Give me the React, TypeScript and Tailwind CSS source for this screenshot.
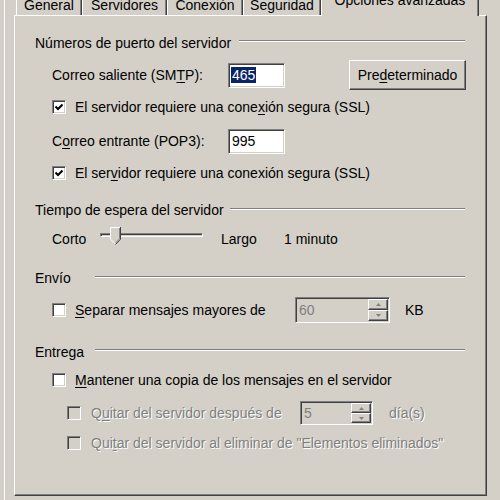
import type { ReactNode } from "react";

// underlined access key letter
const U = ({ children }: { children: ReactNode }) => (
    <span className="underline decoration-1 underline-offset-[2px]">{children}</span>
);

const Tab = ({ width, children }: { width: string; children: ReactNode }) => (
    <div
        className={`flex h-[26px] ${width} shrink-0 justify-center border-l border-t border-r border-l-white border-t-white border-r-[#404040] pt-[7px] shadow-[inset_-1px_0_#808080]`}
    >
        {children}
    </div>
);

const CheckBox = ({ checked = false, disabled = false }: { checked?: boolean; disabled?: boolean }) => (
    <div
        className={`flex h-[14px] w-[14px] shrink-0 items-center justify-center border border-t-[#808080] border-l-[#808080] border-r-white border-b-white shadow-[inset_1px_1px_#404040,inset_-1px_-1px_#d4d0c8] ${
            disabled ? "bg-[#d4d0c8]" : "bg-white"
        }`}
    >
        {checked && (
            <svg width="8" height="8" viewBox="0 0 8 8">
                <path d="M0.5 3.5 L3 6 L7.5 1.5" fill="none" stroke="#000" strokeWidth="2" />
            </svg>
        )}
    </div>
);

const Line = ({ className }: { className: string }) => (
    <div className={`h-[2px] flex-1 border-t border-b border-t-[#808080] border-b-white ${className}`} />
);

const SpinButton = ({ up = false }: { up?: boolean }) => (
    <div className="flex flex-1 items-center justify-center border border-t-white border-l-white border-r-[#404040] border-b-[#404040] bg-[#d4d0c8] shadow-[inset_-1px_-1px_#808080]">
        <svg width="5" height="3" viewBox="0 0 5 3">
            {up ? <path d="M2.5 0 L5 3 L0 3 Z" fill="#808080" /> : <path d="M0 0 L5 0 L2.5 3 Z" fill="#808080" />}
        </svg>
    </div>
);

const SpinBox = ({ value, box }: { value: string; box: string }) => (
    <div
        className={`flex ${box} shrink-0 border border-t-[#808080] border-l-[#808080] border-r-white border-b-white bg-[#d4d0c8] p-px shadow-[inset_1px_1px_#404040,inset_-1px_-1px_#d4d0c8]`}
    >
        <span className="flex flex-1 items-center pl-[2px] text-[#808080]">{value}</span>
        <div className="flex w-[20px] flex-col">
            <SpinButton up />
            <SpinButton />
        </div>
    </div>
);

const dim = "text-[#808080] [text-shadow:1px_1px_0_#ffffff]";

export default function App() {
    return (
        <div className="flex h-[500px] w-[500px] overflow-hidden bg-[#d4d0c8] font-['Liberation_Sans',Arial,sans-serif] text-[14px] leading-4 text-black">
            {/* edge of the window behind */}
            <div className="flex w-[14px] shrink-0">
                <div className="w-[4px]" />
                <div className="w-px bg-white" />
            </div>

            <div className="flex w-[473px] shrink-0 flex-col">
                {/* tabs, cut off at the top */}
                <div className="flex h-[15px] items-end">
                    <div className="w-[2px]" />
                    <Tab width="w-[66px]">General</Tab>
                    <Tab width="w-[85px]">Servidores</Tab>
                    <Tab width="w-[76px]">Conexión</Tab>
                    <Tab width="w-[78px]">Seguridad</Tab>
                    <div className="relative z-10 mb-[-1px] flex h-[30px] w-[158px] shrink-0 justify-center border-l border-t border-r border-l-white border-t-white border-r-[#404040] bg-[#d4d0c8] pt-[5px] shadow-[inset_-1px_0_#808080]">
                        Opciones avanzadas
                    </div>
                </div>

                {/* tab page */}
                <div className="flex h-[481px] flex-col border border-t-white border-l-white border-r-[#404040] border-b-[#404040] shadow-[inset_-1px_-1px_#808080]">
                    <div className="mt-[17px] flex h-[20px] items-center pl-[20px] pr-[21px]">
                        <span>Números de puerto del servidor</span>
                        <Line className="mb-[4px] ml-[8px]" />
                    </div>

                    <div className="flex h-[44px] items-center pl-[37px]">
                        <span className="w-[176px] shrink-0">
                            Correo saliente (SM<U>T</U>P):
                        </span>
                        <div className="flex h-[25px] w-[57px] shrink-0 items-center border border-t-[#808080] border-l-[#808080] border-r-white border-b-white bg-white pl-[2px] shadow-[inset_1px_1px_#404040,inset_-1px_-1px_#d4d0c8]">
                            <span className="bg-[#0a246a] px-px text-white">465</span>
                        </div>
                        <div className="ml-[64px] flex h-[30px] w-[117px] shrink-0 items-center justify-center border border-t-white border-l-white border-r-[#404040] border-b-[#404040] shadow-[inset_-1px_-1px_#808080]">
                            <span>
                                Pre<U>d</U>eterminado
                            </span>
                        </div>
                    </div>

                    <div className="flex h-[20px] items-center pl-[37px]">
                        <CheckBox checked />
                        <span className="ml-[9px]">
                            El servidor requiere una cone<U>x</U>ión segura (SSL)
                        </span>
                    </div>

                    <div className="flex h-[48px] items-center pl-[37px]">
                        <span className="w-[176px] shrink-0">
                            C<U>o</U>rreo entrante (POP3):
                        </span>
                        <div className="flex h-[25px] w-[57px] shrink-0 items-center border border-t-[#808080] border-l-[#808080] border-r-white border-b-white bg-white pl-[3px] shadow-[inset_1px_1px_#404040,inset_-1px_-1px_#d4d0c8]">
                            995
                        </div>
                    </div>

                    <div className="flex h-[16px] items-center pl-[37px]">
                        <CheckBox checked />
                        <span className="ml-[9px]">
                            El ser<U>v</U>idor requiere una conexión segura (SSL)
                        </span>
                    </div>

                    <div className="mt-[19px] flex h-[20px] items-center pl-[20px] pr-[21px]">
                        <span>Tiempo de espera del servidor</span>
                        <Line className="mb-[2px] ml-[6px]" />
                    </div>

                    <div className="flex h-[38px] items-center pl-[37px]">
                        <span className="w-[48px] shrink-0">Corto</span>
                        <div className="relative mb-[8px] flex h-[18px] w-[103px] shrink-0 items-center">
                            <div className="h-[4px] w-full border border-t-[#808080] border-l-[#808080] border-r-white border-b-white shadow-[inset_1px_1px_#404040]" />
                            <svg className="absolute left-[10px] top-[1px]" width="11" height="18" viewBox="0 0 11 18">
                                <path d="M0 0 H11 V12 L5.5 17.5 L0 12 Z" fill="#d4d0c8" />
                                <polyline points="0.5,12 0.5,0.5 10,0.5" fill="none" stroke="#ffffff" />
                                <polyline points="0.5,12.2 5.5,17.2" fill="none" stroke="#ffffff" />
                                <polyline points="10.5,0 10.5,12.2 5.5,17.5" fill="none" stroke="#404040" />
                                <polyline points="9.5,1 9.5,11.8 5.5,16" fill="none" stroke="#808080" />
                            </svg>
                        </div>
                        <span className="ml-[18px] w-[63px] shrink-0">Largo</span>
                        <span>1 minuto</span>
                    </div>

                    <div className="flex h-[39px] items-center pl-[20px] pr-[21px]">
                        <span className="w-[58px] shrink-0">Envío</span>
                        <Line className="mb-[2px] ml-[2px]" />
                    </div>

                    <div className="flex h-[26px] items-center pl-[37px]">
                        <CheckBox />
                        <span className="ml-[9px] w-[220px] shrink-0">
                            <U>S</U>eparar mensajes mayores de
                        </span>
                        <SpinBox value="60" box="h-[26px] w-[95px]" />
                        <span className="ml-[15px]">KB</span>
                    </div>

                    <div className="mt-[17px] flex h-[24px] items-center pl-[20px] pr-[21px]">
                        <span className="w-[58px] shrink-0">Entrega</span>
                        <Line className="mb-[4px] ml-[2px]" />
                    </div>

                    <div className="flex h-[32px] items-center pl-[37px]">
                        <CheckBox />
                        <span className="ml-[9px]">
                            <U>M</U>antener una copia de los mensajes en el servidor
                        </span>
                    </div>

                    <div className="flex h-[34px] items-center pl-[52px]">
                        <CheckBox disabled />
                        <span className={`ml-[10px] w-[209px] shrink-0 ${dim}`}>
                            Q<U>u</U>itar del servidor después de
                        </span>
                        <SpinBox value="5" box="h-[24px] w-[73px]" />
                        <span className={`ml-[16px] ${dim}`}>día(s)</span>
                    </div>

                    <div className="flex h-[26px] items-center pl-[52px]">
                        <CheckBox disabled />
                        <span className={`ml-[10px] ${dim}`}>
                            Qui<U>t</U>ar del servidor al eliminar de "Elementos eliminados"
                        </span>
                    </div>
                </div>
            </div>

            <div className="flex-1" />
        </div>
    );
}
